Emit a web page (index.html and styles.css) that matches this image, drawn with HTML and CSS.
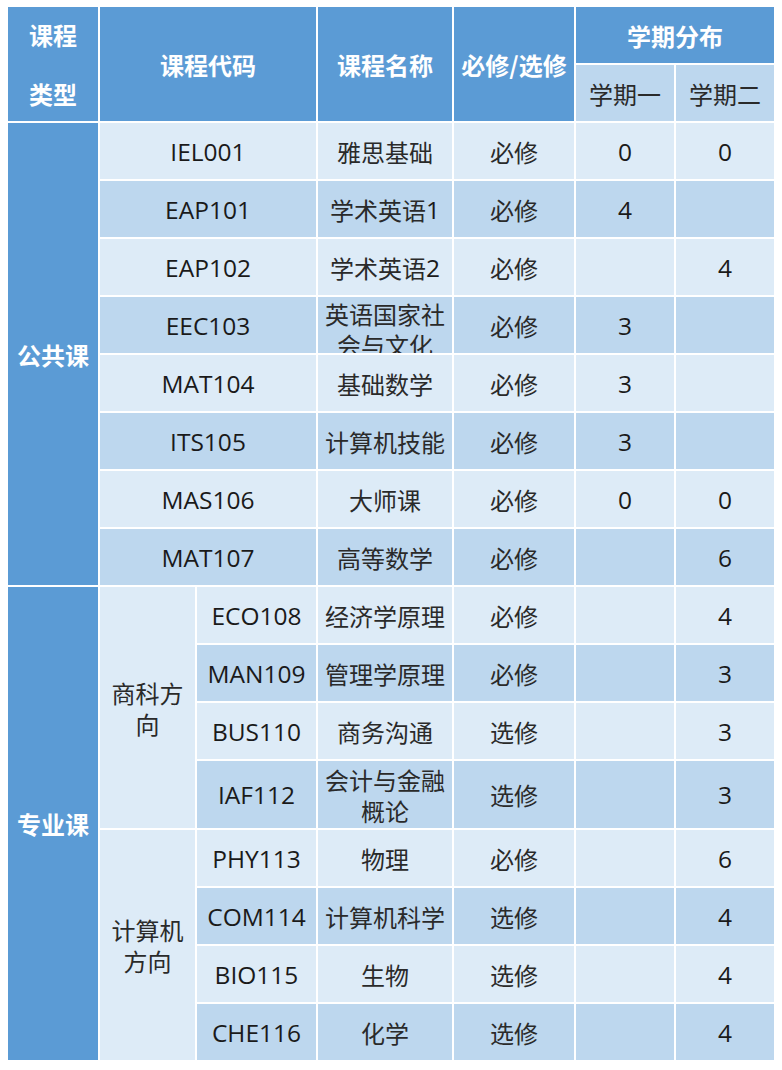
FILE: index.html
```html
<!DOCTYPE html>
<html lang="zh-CN">
<head>
<meta charset="utf-8">
<title>课程设置</title>
<link rel="stylesheet" href="styles.css">
</head>
<body>
<div class="table">
  <div class="c hd rs2 type"><span>课程</span><span>类型</span></div>
  <div class="c hd rs2 cs2">课程代码</div>
  <div class="c hd rs2">课程名称</div>
  <div class="c hd rs2">必修/选修</div>
  <div class="c hd cs2">学期分布</div>
  <div class="c sub">学期一</div>
  <div class="c sub">学期二</div>

  <div class="c hd rs8">公共课</div>
  <div class="c lt cs2 lat">IEL001</div><div class="c lt">雅思基础</div><div class="c lt">必修</div><div class="c lt lat">0</div><div class="c lt lat">0</div>
  <div class="c dk cs2 lat">EAP101</div><div class="c dk">学术英语<span class="lat">1</span></div><div class="c dk">必修</div><div class="c dk lat">4</div><div class="c dk"></div>
  <div class="c lt cs2 lat">EAP102</div><div class="c lt">学术英语<span class="lat">2</span></div><div class="c lt">必修</div><div class="c lt"></div><div class="c lt lat">4</div>
  <div class="c dk cs2 lat">EEC103</div><div class="c dk wrap clip">英语国家社会与文化</div><div class="c dk">必修</div><div class="c dk lat">3</div><div class="c dk"></div>
  <div class="c lt cs2 lat">MAT104</div><div class="c lt">基础数学</div><div class="c lt">必修</div><div class="c lt lat">3</div><div class="c lt"></div>
  <div class="c dk cs2 lat">ITS105</div><div class="c dk">计算机技能</div><div class="c dk">必修</div><div class="c dk lat">3</div><div class="c dk"></div>
  <div class="c lt cs2 lat">MAS106</div><div class="c lt">大师课</div><div class="c lt">必修</div><div class="c lt lat">0</div><div class="c lt lat">0</div>
  <div class="c dk cs2 lat">MAT107</div><div class="c dk">高等数学</div><div class="c dk">必修</div><div class="c dk"></div><div class="c dk lat">6</div>

  <div class="c hd rs8">专业课</div>
  <div class="c lt rs4 wrap dir">商科方向</div>
  <div class="c lt lat">ECO108</div><div class="c lt">经济学原理</div><div class="c lt">必修</div><div class="c lt"></div><div class="c lt lat">4</div>
  <div class="c dk lat">MAN109</div><div class="c dk">管理学原理</div><div class="c dk">必修</div><div class="c dk"></div><div class="c dk lat">3</div>
  <div class="c lt lat">BUS110</div><div class="c lt">商务沟通</div><div class="c lt">选修</div><div class="c lt"></div><div class="c lt lat">3</div>
  <div class="c dk lat">IAF112</div><div class="c dk wrap">会计与金融概论</div><div class="c dk">选修</div><div class="c dk"></div><div class="c dk lat">3</div>
  <div class="c lt rs4 wrap dir">计算机方向</div>
  <div class="c lt lat">PHY113</div><div class="c lt">物理</div><div class="c lt">必修</div><div class="c lt"></div><div class="c lt lat">6</div>
  <div class="c dk lat">COM114</div><div class="c dk">计算机科学</div><div class="c dk">选修</div><div class="c dk"></div><div class="c dk lat">4</div>
  <div class="c lt lat">BIO115</div><div class="c lt">生物</div><div class="c lt">选修</div><div class="c lt"></div><div class="c lt lat">4</div>
  <div class="c dk lat">CHE116</div><div class="c dk">化学</div><div class="c dk">选修</div><div class="c dk"></div><div class="c dk lat">4</div>
</div>
</body>
</html>
```
FILE: styles.css
```css
html, body {
  background: #ffffff;
}
body {
  margin: 7px 8px;
  font-family: "Open Sans", "Noto Sans CJK SC", sans-serif;
  font-size: 24px;
  color: #2a2a2a;
}
.table {
  display: grid;
  grid-template-columns: 90px 95px 119px 134px 120px 98px 98px;
  grid-template-rows: repeat(13, 56px) 67px repeat(4, 56px);
  gap: 2px;
  width: 766px;
}
.c {
  display: flex;
  align-items: center;
  justify-content: center;
  text-align: center;
  overflow: hidden;
  line-height: 31px;
  font-family: "Noto Sans CJK SC", sans-serif;
}
.lat, .c .lat {
  font-family: "Open Sans", "Noto Sans CJK SC", sans-serif;
  font-size: 24.5px;
  color: #1a1a1a;
}
.hd {
  background: #5b9bd5;
  color: #ffffff;
  font-weight: bold;
}
.sub {
  background: #bdd7ee;
}
.lt {
  background: #ddebf7;
}
.dk {
  background: #bdd7ee;
}
.rs2 { grid-row: span 2; }
.rs4 { grid-row: span 4; }
.rs8 { grid-row: span 8; }
.cs2 { grid-column: span 2; }
.type {
  flex-direction: column;
}
.type span {
  display: block;
  line-height: 59px;
}
.wrap {
  padding: 0 5px;
  word-break: break-all;
}
.clip {
  align-items: flex-start;
  padding-top: 1px;
}
.dir {
  padding: 0 8px;
}
```
